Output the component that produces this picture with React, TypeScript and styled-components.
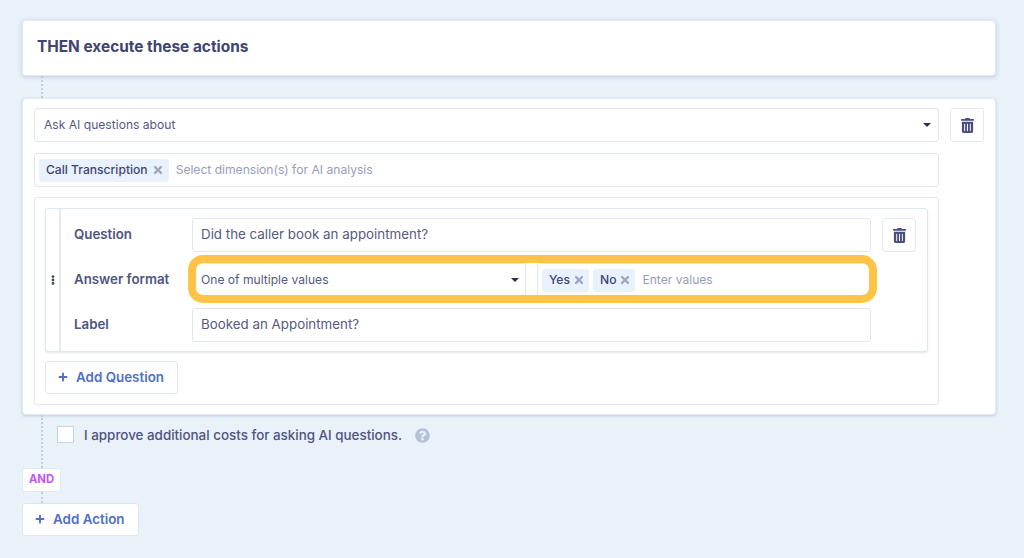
import React from "react";
import styled, { createGlobalStyle } from "styled-components";
import { FaEllipsisV, FaPlus, FaQuestionCircle, FaTimes, FaTrashAlt } from "react-icons/fa";

const GlobalStyle = createGlobalStyle`
  html, body {
    margin: 0;
    padding: 0;
    background: #e9f1f9;
  }
  * {
    box-sizing: border-box;
  }
`;

const Page = styled.div`
  width: 1024px;
  height: 558px;
  overflow: hidden;
  padding: 20px 28px 0 22px;
  background: #e9f1f9;
  font-family: Inter, "Liberation Sans", sans-serif;
  color: #555a80;
  font-size: 12.1px;
`;

const HeaderCard = styled.div`
  height: 56px;
  display: flex;
  align-items: center;
  padding: 0 14px 3px;
  background: #fff;
  border: 1px solid #e3e9f3;
  border-radius: 4px;
  box-shadow: 0 1px 4px rgba(70, 90, 130, 0.25);
  font-size: 15.4px;
  font-weight: 700;
  color: #40456f;
`;

const Connector = styled.div<{ $h: number }>`
  flex: none;
  height: ${({ $h }) => $h}px;
  width: 0;
  margin-left: 18.5px;
  border-left: 2px dotted #c2cade;
`;

const ActionCard = styled.div`
  height: 317px;
  padding: 9px 11px;
  display: flex;
  flex-direction: column;
  gap: 10px;
  background: #fff;
  border: 1px solid #e3e9f3;
  border-radius: 4px;
  box-shadow: 0 1px 3px rgba(70, 90, 130, 0.25);
`;

const Row = styled.div`
  display: flex;
  gap: 11px;
`;

const Field = styled.div<{ $width?: number }>`
  height: 34px;
  flex: ${({ $width }) => ($width ? `0 0 ${$width}px` : "1 1 0")};
  min-width: 0;
  display: flex;
  align-items: center;
  padding: 0 9px 2px;
  background: #fff;
  border: 1px solid #dfe6f2;
  border-radius: 3px;
`;

const InputField = styled(Field)`
  padding-left: 8px;
  font-size: 13.35px;
`;

const TagField = styled(Field)`
  gap: 4px;
  padding: 0 4px;
`;

const SelectField = styled(Field)`
  justify-content: space-between;
  padding-right: 7px;
`;

const FormatSelect = styled(SelectField)`
  padding: 0 6px 2px 8px;
`;

const Caret = styled.span`
  width: 0;
  height: 0;
  margin-top: 2px;
  border-left: 4.5px solid transparent;
  border-right: 4.5px solid transparent;
  border-top: 4.5px solid #2b2f52;
`;

const Tag = styled.span`
  height: 23px;
  display: inline-flex;
  align-items: center;
  gap: 5px;
  padding: 0 6px 2px 7px;
  background: #e8f1fd;
  border-radius: 3px;
  font-weight: 500;
  color: #40456f;
  white-space: nowrap;
  svg {
    width: 10px;
    height: 12px;
    margin-top: 1px;
    color: #9da5bd;
  }
`;

const ValueTag = styled(Tag)`
  gap: 4px;
  padding-right: 5px;
`;

const Placeholder = styled.span`
  margin: 0 0 2px 3px;
  color: #989db8;
  white-space: nowrap;
`;

const IconButton = styled.div`
  flex: 0 0 34px;
  height: 34px;
  display: flex;
  align-items: center;
  justify-content: center;
  background: #fff;
  border: 1px solid #e3e9f3;
  border-radius: 3px;
  color: #4a4f7c;
  font-size: 15px;
`;

const QuestionDelete = styled(IconButton)`
  margin-left: 11px;
`;

const DimensionRow = styled.div`
  width: 905px;
  margin-top: 1px;
`;

const QuestionsBox = styled.div`
  width: 905px;
  height: 208px;
  padding: 10px;
  border: 1px solid #dfe6f2;
  border-radius: 3px;
`;

const QuestionCard = styled.div`
  height: 144px;
  display: flex;
  border: 1px solid #dfe6f2;
  border-radius: 3px;
  box-shadow: 0 1px 2px rgba(70, 90, 130, 0.15);
`;

const Handle = styled.div`
  flex: 0 0 15px;
  display: flex;
  align-items: center;
  justify-content: center;
  border-right: 2px solid #e3e9f3;
  color: #40456f;
  font-size: 10px;
`;

const QuestionRows = styled.div`
  flex: 1;
  padding: 9px 11px 0 13px;
  display: flex;
  flex-direction: column;
  gap: 11px;
`;

const QuestionRow = styled.div`
  display: flex;
  align-items: center;
`;

const RowLabel = styled.div`
  flex: 0 0 118px;
  padding-bottom: 2px;
  font-size: 13.3px;
  font-weight: 600;
  color: #4f5480;
`;

const Controls = styled.div`
  position: relative;
  width: 679px;
  display: flex;
  gap: 11px;
`;

const Highlight = styled.div`
  position: absolute;
  top: -8px;
  left: -4px;
  right: -6px;
  bottom: -6px;
  border: 8px solid #ffc445;
  border-radius: 15px;
  pointer-events: none;
`;

const AddButton = styled.div`
  height: 33px;
  display: inline-flex;
  align-items: center;
  gap: 8px;
  padding: 0 13px 1px 12px;
  background: #fff;
  border: 1px solid #e0e6f1;
  border-radius: 3px;
  font-size: 13.4px;
  font-weight: 600;
  color: #4f6fc4;
  svg {
    width: 10px;
    height: 10px;
  }
`;

const AddQuestion = styled(AddButton)`
  margin-top: 9px;
`;

const ApprovalArea = styled.div`
  height: 53px;
  display: flex;
  align-items: flex-start;
`;

const ApprovalRow = styled.div`
  display: flex;
  align-items: center;
  margin: 11px 0 0 14.5px;
  font-size: 13.4px;
  font-weight: 500;
  color: #4f5480;
`;

const Checkbox = styled.span`
  width: 17px;
  height: 17px;
  margin-right: 10px;
  background: #fff;
  border: 1px solid #c9d2e3;
`;

const HelpIcon = styled(FaQuestionCircle)`
  width: 15px;
  height: 15px;
  margin: 2px 0 0 13px;
  color: #b6c0d9;
`;

const AndBadge = styled.div`
  width: 39px;
  height: 24px;
  display: flex;
  align-items: center;
  justify-content: center;
  padding-bottom: 2px;
  background: #fff;
  border: 1px solid #e3e9f3;
  border-radius: 3px;
  font-size: 11.3px;
  font-weight: 700;
  color: #c653ff;
`;

const App = () => {
  return (
    <Page>
      <GlobalStyle />
      <HeaderCard>THEN execute these actions</HeaderCard>
      <Connector $h={22} />
      <ActionCard>
        <Row>
          <SelectField $width={905}>
            Ask AI questions about
            <Caret />
          </SelectField>
          <IconButton>
            <FaTrashAlt />
          </IconButton>
        </Row>
        <DimensionRow>
          <TagField>
            <Tag>
              Call Transcription
              <FaTimes />
            </Tag>
            <Placeholder>Select dimension(s) for AI analysis</Placeholder>
          </TagField>
        </DimensionRow>
        <QuestionsBox>
          <QuestionCard>
            <Handle>
              <FaEllipsisV />
            </Handle>
            <QuestionRows>
              <QuestionRow>
                <RowLabel>Question</RowLabel>
                <Controls>
                  <InputField>Did the caller book an appointment?</InputField>
                </Controls>
                <QuestionDelete>
                  <FaTrashAlt />
                </QuestionDelete>
              </QuestionRow>
              <QuestionRow>
                <RowLabel>Answer format</RowLabel>
                <Controls>
                  <FormatSelect $width={334}>
                    One of multiple values
                    <Caret />
                  </FormatSelect>
                  <TagField $width={334}>
                    <ValueTag>
                      Yes
                      <FaTimes />
                    </ValueTag>
                    <ValueTag>
                      No
                      <FaTimes />
                    </ValueTag>
                    <Placeholder>Enter values</Placeholder>
                  </TagField>
                  <Highlight />
                </Controls>
              </QuestionRow>
              <QuestionRow>
                <RowLabel>Label</RowLabel>
                <Controls>
                  <InputField>Booked an Appointment?</InputField>
                </Controls>
              </QuestionRow>
            </QuestionRows>
          </QuestionCard>
          <AddQuestion>
            <FaPlus />
            Add Question
          </AddQuestion>
        </QuestionsBox>
      </ActionCard>
      <ApprovalArea>
        <Connector $h={53} />
        <ApprovalRow>
          <Checkbox />
          I approve additional costs for asking AI questions.
          <HelpIcon />
        </ApprovalRow>
      </ApprovalArea>
      <AndBadge>AND</AndBadge>
      <Connector $h={11} />
      <AddButton>
        <FaPlus />
        Add Action
      </AddButton>
    </Page>
  );
};

export default App;
